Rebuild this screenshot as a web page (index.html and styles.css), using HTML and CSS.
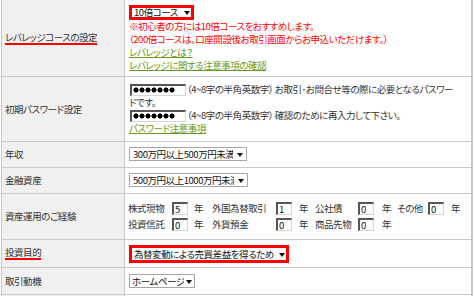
FILE: index.html
```html
<!DOCTYPE html>
<html lang="ja">
<head>
<meta charset="utf-8">
<title>口座開設フォーム</title>
<link rel="stylesheet" href="styles.css">
</head>
<body>
<div class="form">
  <div class="lbl"><span class="mark">レバレッジコースの設定</span></div>
  <div class="val v1">
    <div class="sel hl w-course"><span class="txt">10倍コース</span><i class="arr"></i></div>
    <p class="red">※初心者の方には10倍コースをおすすめします。</p>
    <p class="red">（200倍コースは、口座開設後お取引画面からお申込いただけます。）</p>
    <p><a class="lnk" href="#">レバレッジとは？</a></p>
    <p><a class="lnk" href="#">レバレッジに関する注意事項の確認</a></p>
  </div>

  <div class="lbl">初期パスワード設定</div>
  <div class="val v2">
    <div class="line"><span class="pw"></span><span class="note">（4~8字の半角英数字） お取引･お問合せ等の際に必要となるパスワー</span></div>
    <div class="line">ドです。</div>
    <div class="line"><span class="pw"></span><span class="note">（4~8字の半角英数字） 確認のために再入力して下さい。</span></div>
    <div class="line"><a class="lnk" href="#">パスワード注意事項</a></div>
  </div>

  <div class="lbl">年収</div>
  <div class="val v3">
    <div class="sel w-income"><span class="txt">300万円以上500万円未満</span><i class="arr"></i></div>
  </div>

  <div class="lbl">金融資産</div>
  <div class="val v3">
    <div class="sel w-asset"><span class="txt">500万円以上1000万円未満</span><i class="arr"></i></div>
  </div>

  <div class="lbl">資産運用のご経験</div>
  <div class="val v5">
    <div class="exp">
      <span>株式現物</span><span class="in">5</span><span class="y">年</span>
      <span>外国為替取引</span><span class="in">1</span><span class="y">年</span>
      <span>公社債</span><span class="in">0</span><span class="y">年</span>
      <span>その他</span><span class="in">0</span><span class="y">年</span>
      <span>投資信託</span><span class="in">0</span><span class="y">年</span>
      <span>外貨預金</span><span class="in">0</span><span class="y">年</span>
      <span>商品先物</span><span class="in">0</span><span class="y">年</span>
    </div>
  </div>

  <div class="lbl"><span class="mark">投資目的</span></div>
  <div class="val v6">
    <div class="sel hl tall w-purpose"><span class="txt">為替変動による売買差益を得るため</span><i class="arr"></i></div>
  </div>

  <div class="lbl">取引動機</div>
  <div class="val v7">
    <div class="sel w-motive"><span class="txt">ホームページ</span><i class="arr"></i></div>
  </div>

  <div class="lbl"></div>
  <div class="val v8"></div>
</div>
</body>
</html>
```

FILE: styles.css
```css
* { box-sizing: border-box; }
html, body { margin: 0; padding: 0; background: #fff; }
body {
  font-family: "Noto Sans CJK JP", "Noto Sans", sans-serif;
  font-size: 9.5px;
  letter-spacing: -0.45px;
  line-height: 13px;
  color: #333;
  font-feature-settings: "palt";
}
p { margin: 0; height: 13px; }

.form {
  display: grid;
  grid-template-columns: 124px 348px;
  width: 472px;
  margin-left: 1px;
}
.lbl {
  background: #f0f0f0;
  border-left: 1px solid #c8c8c8;
  border-right: 1px solid #c8c8c8;
  border-bottom: 1px solid #c8c8c8;
  display: flex;
  align-items: center;
  padding-left: 3px;
  white-space: nowrap;
}
.val {
  border-bottom: 1px solid #c8c8c8;
  border-right: 2px solid #c8c8c8;
  padding: 0 4px;
  white-space: nowrap;
}
.v1 { padding: 5px 4px 4px; }
.v2 { padding: 6px 4px; }
.v3 { padding: 5px 4px 6px; }
.v5 { padding: 8px 4px 8px 3px; }
.v6 { padding: 5px 4px 4px; }
.v7 { padding: 6px 4px; }
.v8 { height: 20px; }

.mark {
  display: inline-block;
  line-height: 11px;
  border-bottom: 2px solid #f00;
}

.red { color: #f00; }
.lnk { color: #669922; text-decoration: underline; }

/* select-like controls */
.sel {
  display: flex;
  align-items: center;
  height: 14px;
  border: 1px solid #a6a6a6;
  background: #fff;
  color: #111;
  padding-left: 3px;
  overflow: hidden;
}
.sel .txt { flex: 1; overflow: hidden; white-space: nowrap; }
.arr {
  flex: none;
  width: 0;
  height: 0;
  border-top: 4px solid #111;
  border-left: 3px solid transparent;
  border-right: 3px solid transparent;
  margin: 1px 3px 0 4px;
}
.sel.hl { border: 3px solid #f00; height: 15px; padding-left: 2px; }
.sel.hl .arr { margin-right: 1px; }
.sel.tall { height: 18px; }
.w-course { width: 65px; }
.w-income { width: 118px; }
.w-asset { width: 119px; }
.w-purpose { width: 160px; }
.w-motive { width: 66px; padding-left: 2px; }
.w-motive .arr { margin-left: 2px; margin-right: 2px; }

/* password lines */
.line { display: flex; align-items: center; height: 13px; }
.pw {
  flex: none;
  width: 56px;
  height: 12px;
  background: #fff;
  border-style: solid;
  border-width: 2px 1px 1px 2px;
  border-color: #555 #d6d6d6 #d6d6d6 #555;
  margin-left: 1px;
  margin-right: 1px;
}
.pw::before {
  content: "";
  display: block;
  width: 42px;
  height: 6px;
  margin: 1px 0 0 1px;
  background: radial-gradient(circle, #000 0 2.3px, transparent 2.8px) 0 0 / 6px 6px repeat-x;
}

/* experience grid */
.exp {
  display: grid;
  grid-template-columns: 44px 17px 23px 64px 18px 21px 43px 19px 20px 31px 18px auto;
  grid-auto-rows: 13px;
  row-gap: 3px;
  align-items: center;
}
.in {
  display: block;
  width: 16px;
  height: 13px;
  background: #fff;
  border-style: solid;
  border-width: 2px 1px 1px 2px;
  border-color: #555 #d6d6d6 #d6d6d6 #555;
  color: #111;
  line-height: 10px;
  padding-left: 1px;
}
.y { padding-left: 5px; }
```
